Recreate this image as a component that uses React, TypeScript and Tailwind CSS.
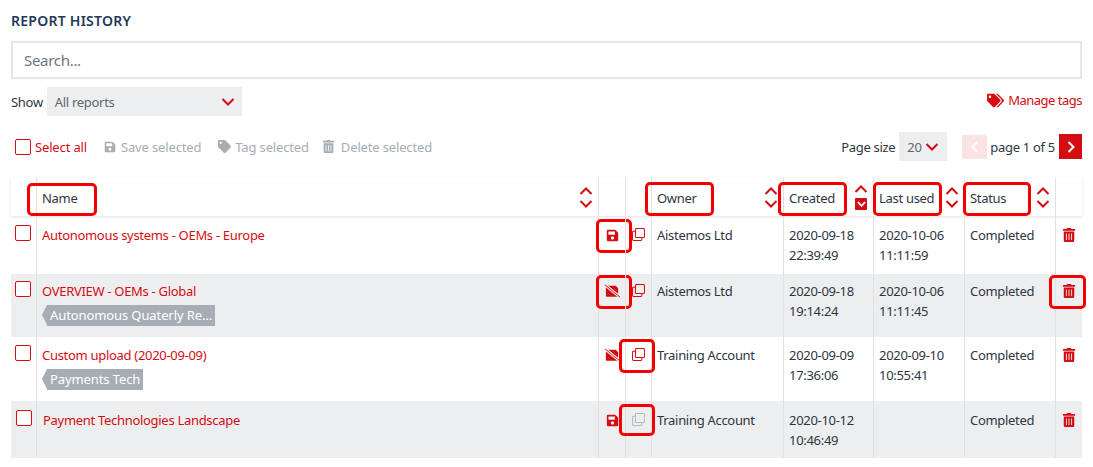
import React from 'react';
import { FaSave, FaTag, FaTags, FaTrashAlt } from 'react-icons/fa';

const RED = '#d40d12';
const cols = 'grid grid-cols-[25px_562px_27px_26px_132px_90px_91px_91px_27px]';
const line = 'border-l border-[#dfe1e4]';

function Chevron({ up, className }: { up?: boolean; className?: string }) {
  return (
    <svg viewBox="0 0 14 8" className={className} width="14" height="8" fill="none" stroke={RED} strokeWidth="2">
      <polyline points={up ? '1.5,7 7,1.5 12.5,7' : '1.5,1 7,6.5 12.5,1'} />
    </svg>
  );
}

function SortArrows({ active }: { active?: boolean }) {
  return (
    <div className="flex flex-col items-center gap-[5px]">
      <Chevron up />
      {active ? (
        <span className="w-[12px] h-[12px] bg-[#d40d12] rounded-[1px] flex items-center justify-center">
          <svg viewBox="0 0 10 6" width="9" height="6" fill="none" stroke="#fff" strokeWidth="2">
            <polyline points="1,1 5,5 9,1" />
          </svg>
        </span>
      ) : (
        <Chevron />
      )}
    </div>
  );
}

function CopyIcon({ color = RED }: { color?: string }) {
  return (
    <svg viewBox="0 0 14 14" width="13" height="13" fill="none" stroke={color} strokeWidth="1.1">
      <rect x="3.7" y="0.6" width="9.7" height="9.7" rx="1" />
      <path d="M3.7 3.4H1.6a1 1 0 0 0-1 1v8a1 1 0 0 0 1 1h8a1 1 0 0 0 1-1v-2.1" />
    </svg>
  );
}

function SaveOffIcon({ bg }: { bg: string }) {
  return (
    <svg viewBox="0 0 18 14" width="17" height="14">
      <path fill={RED} d="M3 1.5h9.5l2.5 2.5v8a1 1 0 0 1-1 1H3a1 1 0 0 1-1-1V2.5a1 1 0 0 1 1-1z" />
      <path d="M1 0.5L17 13.5" stroke={bg} strokeWidth="3" />
      <path d="M1 0.5L17 13.5" stroke={RED} strokeWidth="1" />
    </svg>
  );
}

function Checkbox() {
  return <span className="block w-[16px] h-[16px] rounded-[2px] border border-[#d40d12] bg-white" />;
}

// red call-out drawn over the screenshot, positioned from its cell
function Callout({ className }: { className: string }) {
  return <span className={`absolute border-[3px] border-[#f50000] rounded-[5px] pointer-events-none ${className}`} />;
}

function Tag({ label }: { label: string }) {
  return (
    <div className="mt-[5px] flex items-stretch h-[21px] w-fit">
      <span className="w-0 h-0 border-y-[10.5px] border-y-transparent border-r-[5px] border-r-[#a6adb4]" />
      <span className="bg-[#a6adb4] text-white px-[3px] tracking-[-0.1px] leading-[21px] whitespace-nowrap">{label}</span>
    </div>
  );
}

type Report = {
  name: string;
  tag?: string;
  owner: string;
  created: [string, string];
  used?: [string, string];
  rowClass: string;
  bg: string;
  pad: string;
  boxPad: string;
  nudge?: boolean;
  saveOff?: boolean;
  copyGrey?: boolean;
  saveCall?: string;
  copyCall?: string;
  trashCall?: string;
};

const reports: Report[] = [
  {
    name: 'Autonomous systems - OEMs - Europe',
    owner: 'Aistemos Ltd',
    created: ['2020-09-18', '22:39:49'],
    used: ['2020-10-06', '11:11:59'],
    rowClass: 'h-[58px]',
    bg: '#fff',
    pad: 'pt-[10px]',
    boxPad: 'pt-[9px]',
    saveCall: 'left-[-3px] top-[3px] w-[36px] h-[34px]',
  },
  {
    name: 'OVERVIEW - OEMs - Global',
    tag: 'Autonomous Quaterly Re…',
    owner: 'Aistemos Ltd',
    created: ['2020-09-18', '19:14:24'],
    used: ['2020-10-06', '11:11:45'],
    rowClass: 'h-[63px] bg-[#edeef0]',
    bg: '#edeef0',
    pad: 'pt-[8px]',
    boxPad: 'pt-[7px]',
    saveOff: true,
    saveCall: 'left-[-3px] top-[1px] w-[36px] h-[34px]',
    trashCall: 'left-[-7px] top-[1px] w-[37px] h-[34px]',
  },
  {
    name: 'Custom upload (2020-09-09)',
    tag: 'Payments Tech',
    owner: 'Training Account',
    created: ['2020-09-09', '17:36:06'],
    used: ['2020-09-10', '10:55:41'],
    rowClass: 'h-[64px]',
    bg: '#fff',
    pad: 'pt-[9px]',
    boxPad: 'pt-[8px]',
    saveOff: true,
    copyCall: 'left-[-7px] top-[2px] w-[36px] h-[34px]',
  },
  {
    name: 'Payment Technologies Landscape',
    owner: 'Training Account',
    created: ['2020-10-12', '10:46:49'],
    rowClass: 'h-[57px] bg-[#edeef0]',
    bg: '#edeef0',
    pad: 'pt-[10px]',
    boxPad: 'pt-[9px]',
    nudge: true,
    copyGrey: true,
    copyCall: 'left-[-7px] top-[3px] w-[36px] h-[32px]',
  },
];

function ReportRow({ r }: { r: Report }) {
  const cell = `${r.pad} px-[5px] ${line}`;
  const dates = `${cell} leading-[20px]`;
  return (
    <div className={`${cols} ${r.rowClass}`}>
      <div className={`${r.boxPad} ${r.nudge ? 'pl-[5px]' : 'pl-[4px]'}`}>
        <Checkbox />
      </div>
      <div className={`${cell} text-[#d40d12]`}>
        <div className={r.nudge ? 'ml-px' : ''}>{r.name}</div>
        {r.tag && <Tag label={r.tag} />}
      </div>
      <div className={`${line} relative ${r.pad} flex justify-center`}>
        <span className="mt-[2px] h-[14px] flex items-center">
          {r.saveOff ? <SaveOffIcon bg={r.bg} /> : <FaSave size={13} color={RED} />}
        </span>
        {r.saveCall && <Callout className={r.saveCall} />}
      </div>
      <div className={`${line} relative ${r.pad} flex justify-center`}>
        <span className="mt-[2px]">
          <CopyIcon color={r.copyGrey ? '#b4b9bf' : RED} />
        </span>
        {r.copyCall && <Callout className={r.copyCall} />}
      </div>
      <div className={cell}>{r.owner}</div>
      <div className={dates}>
        <div className="-mt-px">{r.created[0]}</div>
        <div>{r.created[1]}</div>
      </div>
      <div className={dates}>
        {r.used && (
          <>
            <div className="-mt-px">{r.used[0]}</div>
            <div>{r.used[1]}</div>
          </>
        )}
      </div>
      <div className={cell}>Completed</div>
      <div className={`${line} relative ${r.pad} flex justify-center`}>
        <span className="mt-[2px]">
          <FaTrashAlt size={14} color={RED} />
        </span>
        {r.trashCall && <Callout className={r.trashCall} />}
      </div>
    </div>
  );
}

function HeaderCell({ label, active, calloutClass }: { label: string; active?: boolean; calloutClass: string }) {
  return (
    <div className={`relative flex items-center justify-between pl-[5px] pr-[5px] ${line}`}>
      <span className="mt-[2px]">{label}</span>
      <SortArrows active={active} />
      <Callout className={calloutClass} />
    </div>
  );
}

export default function App() {
  return (
    <div className="w-[1093px] h-[467px] overflow-hidden bg-white pl-[11px] pr-[11px] pt-[12px] text-[13px] tracking-[-0.3px] leading-[18px] text-[#2f3640] font-['Noto_Sans',sans-serif]">
      <h1 className="text-[14px] tracking-[0.25px] leading-[18px] font-semibold text-[#1f3a57]">REPORT HISTORY</h1>

      <div className="mt-[11px] h-[38px] border-2 border-[#e6e7e9] flex items-center pl-[11px] text-[15px] text-[#6d7580]">
        Search...
      </div>

      <div className="mt-[8px] h-[29px] flex items-center justify-between">
        <div className="flex items-center gap-[4px]">
          <span>Show</span>
          <div className="w-[195px] h-[29px] bg-[#edeef0] flex items-center justify-between pl-[8px] pr-[7px] text-[#5f6771]">
            <span>All reports</span>
            <Chevron />
          </div>
        </div>
        <div className="flex items-center gap-[4px] text-[#d40d12] mt-[-3px] tracking-[-0.5px]">
          <FaTags size={17} color={RED} />
          <span>Manage tags</span>
        </div>
      </div>

      <div className="mt-[16px] h-[29px] flex items-center justify-between">
        <div className="flex items-center text-[#a6adb4] tracking-[-0.15px]">
          <span className="ml-[4px]">
            <Checkbox />
          </span>
          <span className="ml-[4px] text-[#d40d12]">Select all</span>
          <FaSave size={12} className="ml-[17px]" />
          <span className="ml-[5px]">Save selected</span>
          <FaTag size={13} className="ml-[17px]" />
          <span className="ml-[4px]">Tag selected</span>
          <FaTrashAlt size={13} className="ml-[13px]" />
          <span className="ml-[6px]">Delete selected</span>
        </div>
        <div className="flex items-center">
          <span>Page size</span>
          <div className="ml-[4px] w-[48px] h-[29px] bg-[#edeef0] flex items-center pl-[8px] gap-[3px] text-[#5f6771]">
            <span>20</span>
            <Chevron />
          </div>
          <span className="ml-[15px] w-[25px] h-[24px] bg-[#fbe3e4] flex items-center justify-center">
            <svg viewBox="0 0 8 12" width="8" height="12" fill="none" stroke="#fff" strokeWidth="2"><polyline points="6.5,1 1.5,6 6.5,11" /></svg>
          </span>
          <span className="ml-[3px]">page 1 of 5</span>
          <span className="ml-[4px] w-[23px] h-[25px] bg-[#d40d12] flex items-center justify-center">
            <svg viewBox="0 0 8 12" width="8" height="12" fill="none" stroke="#fff" strokeWidth="2"><polyline points="1.5,1 6.5,6 1.5,11" /></svg>
          </span>
        </div>
      </div>

      <div className={`${cols} mt-[17px] h-[38px] shadow-[0_1px_3px_rgba(0,0,0,0.12)]`}>
        <div />
        <HeaderCell label="Name" calloutClass="left-[-10px] top-[5px] w-[70px] h-[33px]" />
        <div className={line} />
        <div className={line} />
        <HeaderCell label="Owner" calloutClass="left-[-7px] top-[4px] w-[69px] h-[34px]" />
        <HeaderCell label="Created" active calloutClass="left-[-6px] top-[4px] w-[69px] h-[34px]" />
        <HeaderCell label="Last used" calloutClass="left-[-1px] top-[4px] w-[69px] h-[34px]" />
        <HeaderCell label="Status" calloutClass="left-[-2px] top-[4px] w-[68px] h-[34px]" />
        <div className={line} />
      </div>

      {reports.map((r) => (
        <ReportRow key={r.name} r={r} />
      ))}
    </div>
  );
}
